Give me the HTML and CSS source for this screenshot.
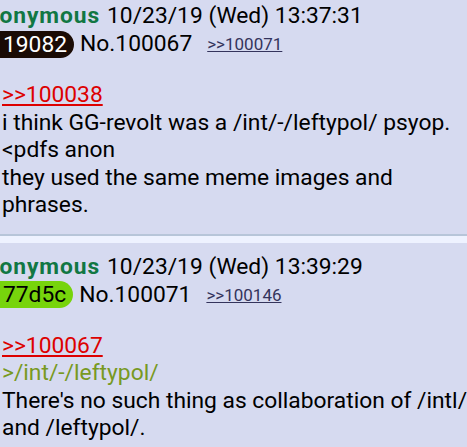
FILE: index.html
```html
<!DOCTYPE html>
<html>
<head>
<meta charset="utf-8">
<link rel="stylesheet" href="styles.css">
</head>
<body>
<div class="thread">
  <div class="post first">
    <div class="head">
      <span class="name">Anonymous</span>
      <span class="date">10/23/19 (Wed) 13:37:31</span>
    </div>
    <div class="head">
      <span class="id dark">19082</span>
      <span class="no">No.100067</span>
      <a class="backlink">&gt;&gt;100071</a>
    </div>
    <div class="msg">
      <a class="quotelink">&gt;&gt;100038</a><br>
      i think GG-revolt was a /int/-/leftypol/ psyop.<br>
      &lt;pdfs anon<br>
      they used the same meme images and<br>
      phrases.
    </div>
  </div>
  <div class="post">
    <div class="head">
      <span class="name">Anonymous</span>
      <span class="date">10/23/19 (Wed) 13:39:29</span>
    </div>
    <div class="head">
      <span class="id green">77d5c</span>
      <span class="no">No.100071</span>
      <a class="backlink">&gt;&gt;100146</a>
    </div>
    <div class="msg">
      <a class="quotelink">&gt;&gt;100067</a><br>
      <span class="quote">&gt;/int/-/leftypol/</span><br>
      There's no such thing as collaboration of /intl/<br>
      and /leftypol/.
    </div>
  </div>
</div>
</body>
</html>
```

FILE: styles.css
```css
html, body {
  margin: 0;
  padding: 0;
  background: #eef2ff;
  overflow: hidden;
}
body {
  font-family: Roboto, "Noto Sans", sans-serif;
  font-size: 22.8px;
  color: #000;
}
.thread {
  display: flex;
  flex-direction: column;
  gap: 7px;
  margin-top: -8px;
}
.post {
  background: #d6daf0;
  border-bottom: 2px solid #b7c5d9;
  padding: 10px 0 15px 2px;
}
.head {
  line-height: 28px;
  white-space: nowrap;
  display: flex;
  align-items: center;
}
.name {
  font-weight: bold;
  color: #117743;
  letter-spacing: 0.9px;
  margin-left: -32px;
  margin-right: 7px;
}
.id {
  margin-left: -2px;
  padding: 0 7px 0 3px;
  border-radius: 0 14px 14px 0;
  line-height: 27px;
  margin-right: 6px;
}
.id.dark {
  background: #1a0b05;
  color: #fff;
}
.id.green {
  background: #77d40c;
  color: #000;
}
.backlink {
  font-size: 17px;
  color: #34345c;
  text-decoration: underline;
  margin-left: 15px;
}
.msg {
  margin-top: 23px;
  line-height: 27.5px;
  white-space: nowrap;
}
.quotelink {
  color: #dd0000;
  text-decoration: underline;
}
.quote {
  color: #789922;
}
```
